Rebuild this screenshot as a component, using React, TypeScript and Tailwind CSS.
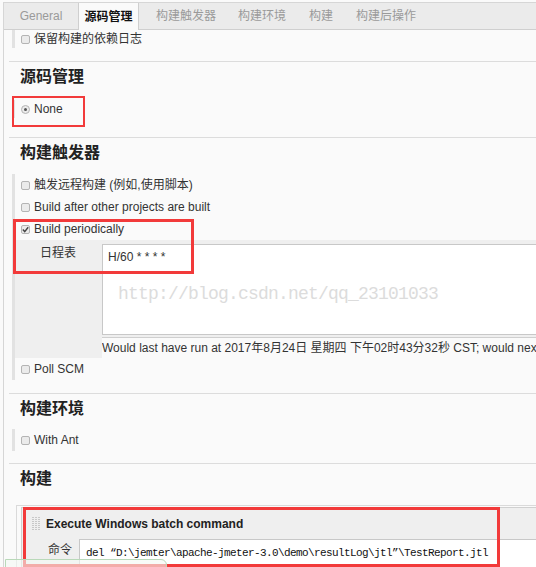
import React from "react";

const sans = "font-['Liberation_Sans','Noto_Sans_CJK_SC',sans-serif]";

const tabs = [
  { label: "General", w: "w-[74px]" },
  { label: "源码管理", w: "w-[61px]", active: true },
  { label: "构建触发器", w: "w-[94px]" },
  { label: "构建环境", w: "w-[58px]" },
  { label: "构建", w: "w-[60px]" },
  { label: "构建后操作", w: "w-[70px]" },
];

const Check = ({ checked = false }: { checked?: boolean }) => (
  <span className="w-[9px] h-[9px] shrink-0 rounded-[2px] border border-[#b4b4b4] bg-[#ebebeb] flex items-center justify-center">
    {checked && (
      <svg width="7" height="7" viewBox="0 0 7 7">
        <path d="M0.8 3.6 L2.7 5.6 L6.2 1.2" stroke="#444" strokeWidth="1.4" fill="none" />
      </svg>
    )}
  </span>
);

const Radio = () => (
  <span className="w-[9px] h-[9px] shrink-0 rounded-full border border-[#b4b4b4] bg-[#ebebeb] flex items-center justify-center">
    <span className="w-[3px] h-[3px] rounded-full bg-[#555]" />
  </span>
);

const Row = ({ children, h = "h-[22px]" }: { children: React.ReactNode; h?: string }) => (
  <div className={`flex items-center gap-[4px] pl-[6px] ${h} whitespace-nowrap`}>{children}</div>
);

const Heading = ({ children }: { children: React.ReactNode }) => (
  <div className="ml-[16px] mt-[3px] h-[24px] flex items-center text-[16px] font-bold text-[#222]">{children}</div>
);

const Sep = ({ mt }: { mt: string }) => <div className={`ml-[5px] border-t border-[#dcdcdc] ${mt}`} />;

const Grip = () => (
  <svg width="8" height="15" viewBox="0 0 8 15">
    {Array.from({ length: 7 }).map((_, r) =>
      [0, 3, 6].map((c) => <rect key={`${r}-${c}`} x={c} y={r * 2 + 1} width="2" height="1" fill="#c8c8c8" />)
    )}
  </svg>
);

export default function App() {
  return (
    <div className={`relative w-[536px] h-[567px] overflow-hidden bg-[#fafafa] text-[12px] text-[#333] ${sans}`}>
      <div className="ml-[3px] mt-[2px] h-[565px] border-l border-t border-[#d6d6d6]">
        {/* tabs */}
        <div className="flex h-[27px] bg-[#ebebeb] border-b border-[#cfcfcf]">
          {tabs.map((t) => (
            <div
              key={t.label}
              className={`${t.w} flex items-center justify-center ${
                t.active
                  ? "bg-[#fafafa] border-l border-r border-[#cfcfcf] -mb-px font-bold text-[#111]"
                  : "text-[#9a9a9a]"
              }`}
            >
              {t.label}
            </div>
          ))}
        </div>

        <div className="ml-[8px] border-l-[3px] border-[#e2e2e2]">
          <Row h="h-[18px]">
            <Check />
            <span>保留构建的依赖日志</span>
          </Row>
        </div>

        <Sep mt="mt-[13px]" />
        <Heading>源码管理</Heading>
        <div className="ml-[8px] mt-[11px] border-l-[3px] border-[#e2e2e2]">
          <Row h="h-[18px]">
            <Radio />
            <span>None</span>
          </Row>
        </div>

        <Sep mt="mt-[19px]" />
        <Heading>构建触发器</Heading>
        <div className="ml-[8px] mt-[9px] border-l-[3px] border-[#e2e2e2]">
          <Row>
            <Check />
            <span>触发远程构建 (例如,使用脚本)</span>
          </Row>
          <Row>
            <Check />
            <span>Build after other projects are built</span>
          </Row>
          <Row>
            <Check checked />
            <span>Build periodically</span>
          </Row>
          <div className="flex bg-[#efefef]">
            <div className="w-[87px] shrink-0 pl-[25px] pt-[4px] leading-[18px]">日程表</div>
            <div className="flex-1 pt-[4px] min-w-0">
              <div className="relative h-[91px] bg-white border border-r-0 border-[#c8c8c8] pl-[5px] pt-[4px] leading-[16px]">
                H/60 * * * *
                <span className="absolute left-[15px] top-[37px] leading-[24px] text-[18px] tracking-[-0.8px] text-[#dcdcdc] font-['Liberation_Mono',monospace] whitespace-nowrap">
                  http://blog.csdn.net/qq_23101033
                </span>
              </div>
              <div className="mt-[2px] border-t border-[#cfcfcf]" />
              <div className="h-[20px] bg-[#fafafa] flex items-center whitespace-nowrap overflow-hidden">
                Would last have run at 2017年8月24日 星期四 下午02时43分32秒 CST; would next run at 2017年8月24日 星期四 下午03时43分32秒 CST.
              </div>
            </div>
          </div>
          <Row>
            <Check />
            <span>Poll SCM</span>
          </Row>
        </div>

        <Sep mt="mt-[13px]" />
        <Heading>构建环境</Heading>
        <div className="ml-[8px] mt-[8px] border-l-[3px] border-[#e2e2e2]">
          <Row>
            <Check />
            <span>With Ant</span>
          </Row>
        </div>

        <Sep mt="mt-[12px]" />
        <Heading>构建</Heading>
        <div className="ml-[12px] mt-[14px] border-l border-t border-[#dadada] pl-[4px] pt-[1px]">
          <div className="border-l border-t border-[#d0d0d0] bg-[#efefef]">
            <div className="h-[31px] flex items-center gap-[6px] pl-[10px]">
              <Grip />
              <span className="font-bold text-[#222]">Execute Windows batch command</span>
            </div>
            <div className="flex">
              <div className="w-[57px] shrink-0 pl-[26px] pt-[2px] leading-[18px]">命令</div>
              <div className="flex-1 h-[30px] bg-white border-l border-t border-[#c8c8c8] pl-[6px] pt-[4px] leading-[18px] whitespace-nowrap overflow-hidden text-[11px] tracking-[-0.6px] text-[#111] font-['Liberation_Mono','Noto_Sans_CJK_SC',monospace]">
                del “D:\jemter\apache-jmeter-3.0\demo\resultLog\jtl”\TestReport.jtl
              </div>
            </div>
          </div>
        </div>
      </div>

      {/* annotation overlays */}
      <div className="absolute left-[12px] top-[96px] w-[73px] h-[31px] border-[2px] border-[#f23a3a]" />
      <div className="absolute left-[13px] top-[219px] w-[181px] h-[55px] border-[3px] border-[#f23a3a]" />
      <div className="absolute left-[23px] top-[507px] w-[477px] h-[60px] border-[3px] border-[#f23a3a]" />
      <div className="absolute left-[5px] top-[559px] w-[162px] h-[20px] rounded-tr-[6px] border border-[#b9d9b9] bg-[#f3f8f3]/60" />
    </div>
  );
}
